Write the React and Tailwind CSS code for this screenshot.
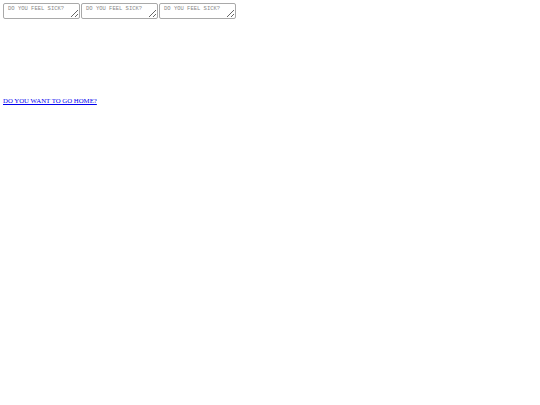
const mono = { fontFamily: '"Liberation Mono", monospace' };

function Box() {
  return (
    <textarea
      className="w-[77px] h-[16px] border border-[#a9a9a9] rounded-[2px] bg-white px-[4px] py-[1px] text-[5.5px] leading-[7px] align-top placeholder:text-[#8a8a8a] resize-y"
      style={mono}
      placeholder="DO YOU FEEL SICK?"
    />
  );
}

export default function App() {
  return (
    <div className="p-[3px] bg-white min-h-[405px] font-['Liberation_Serif',serif]">
      <div className="flex gap-[1px]">
        <Box />
        <Box />
        <Box />
      </div>
      <div className="mt-[67px]">
        <a href="#" className="text-[#0000ee] underline text-[6.8px] leading-[9px]">DO YOU WANT TO GO HOME?</a>
      </div>
    </div>
  );
}
